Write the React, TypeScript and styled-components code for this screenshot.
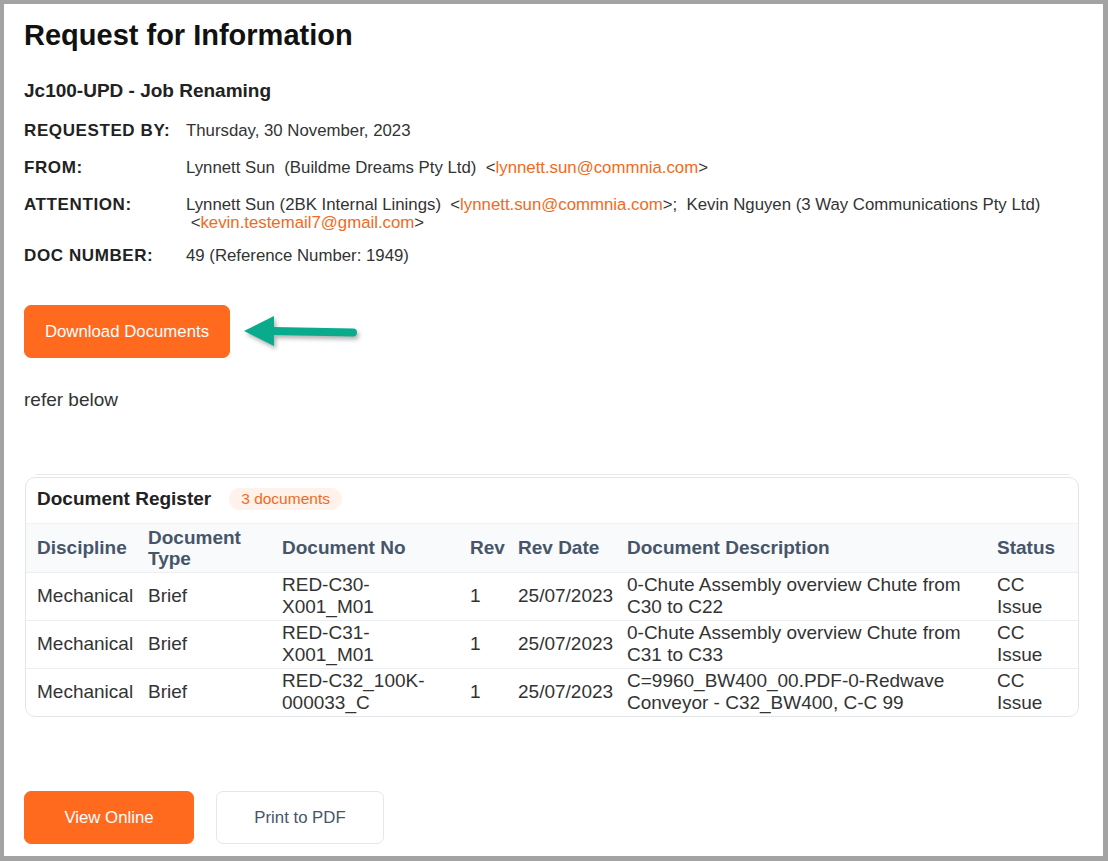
import React from 'react';
import styled, { createGlobalStyle } from 'styled-components';

const GlobalStyle = createGlobalStyle`
  html, body {
    margin: 0;
    padding: 0;
    background: #ffffff;
  }
  body {
    font-family: "Liberation Sans", Arial, sans-serif;
    color: #333333;
  }
  * {
    box-sizing: border-box;
  }
`;

const Frame = styled.div`
  width: 1108px;
  height: 861px;
  border-style: solid;
  border-color: #a3a3a3;
  border-width: 4px 5px 5px 4px;
  padding: 14px 24px 0 20px;
  overflow: hidden;
`;

const Title = styled.h1`
  margin: 0;
  font-size: 29px;
  line-height: 34px;
  font-weight: 700;
  color: #111111;
`;

const Subject = styled.h2`
  margin: 28px 0 0;
  font-size: 19px;
  line-height: 22px;
  font-weight: 700;
  color: #222222;
`;

const InfoGrid = styled.div`
  margin-top: 18px;
  display: grid;
  grid-template-columns: 162px 1fr;
  row-gap: 15px;
`;

const Label = styled.div`
  font-size: 17px;
  letter-spacing: 0.6px;
  font-weight: 700;
  line-height: 22px;
  color: #222222;
`;

const Value = styled.div`
  font-size: 16.8px;
  line-height: 18px;
  padding-top: 2px;
  margin-bottom: -2px;
  color: #333333;
`;

const Email = styled.span`
  color: #f26a21;
`;

const ActionRow = styled.div`
  margin-top: 38px;
  display: flex;
  align-items: center;
`;

const Button = styled.button<{ $variant?: 'primary' | 'outline'; $width: number }>`
  width: ${p => p.$width}px;
  height: 53px;
  padding: 0;
  font-family: "Liberation Sans", Arial, sans-serif;
  font-size: 16.8px;
  border-radius: 7px;
  cursor: pointer;
  background: ${p => (p.$variant === 'outline' ? '#ffffff' : '#ff6a1f')};
  color: ${p => (p.$variant === 'outline' ? '#475569' : '#ffffff')};
  border: 1px solid ${p => (p.$variant === 'outline' ? '#e5e7eb' : '#ff6a1f')};
`;

const Arrow = styled.svg`
  margin-left: 13px;
  margin-top: 2px;
  filter: drop-shadow(2px 3px 2px rgba(0, 0, 0, 0.3));
`;

const Note = styled.p`
  margin: 32px 0 0;
  font-size: 19px;
  line-height: 20px;
  color: #333333;
`;

const Divider = styled.div`
  margin: 64px 9px 0 12px;
  height: 1px;
  background: #e8eaed;
`;

const Card = styled.section`
  margin-top: 2px;
  margin-left: 1px;
  border: 1px solid #e3e5e8;
  border-radius: 10px;
  overflow: hidden;
`;

const CardHeader = styled.div`
  height: 46px;
  display: flex;
  align-items: center;
  gap: 18px;
  padding: 0 11px 3px;
  border-bottom: 1px solid #f0f2f5;
`;

const CardTitle = styled.h3`
  margin: 0;
  font-size: 19px;
  font-weight: 700;
  color: #222222;
`;

const Badge = styled.span`
  height: 22px;
  display: inline-flex;
  align-items: center;
  padding: 0 12px;
  border-radius: 11px;
  background: #fff2ea;
  color: #f26a21;
  font-size: 15.5px;
`;

const Table = styled.table`
  width: 100%;
  border-collapse: collapse;
  table-layout: fixed;
  font-size: 19px;
`;

const Th = styled.th<{ $w?: number }>`
  width: ${p => (p.$w ? `${p.$w}px` : 'auto')};
  height: 48px;
  padding: 0 12px 0 11px;
  text-align: left;
  font-weight: 700;
  line-height: 21px;
  color: #475569;
  background: #f8fafc;
`;

const Td = styled.td<{ $nowrap?: boolean }>`
  height: 48px;
  padding: 0 12px 0 11px;
  line-height: 22px;
  color: #333333;
  border-top: 1px solid #eceef1;
  white-space: ${p => (p.$nowrap ? 'nowrap' : 'normal')};
`;

const Footer = styled.div`
  margin-top: 74px;
  display: flex;
  gap: 22px;
`;

const docs = [
  {
    discipline: 'Mechanical',
    type: 'Brief',
    no: 'RED-C30-X001_M01',
    rev: '1',
    date: '25/07/2023',
    description: '0-Chute Assembly overview Chute from C30 to C22',
    status: 'CC Issue',
  },
  {
    discipline: 'Mechanical',
    type: 'Brief',
    no: 'RED-C31-X001_M01',
    rev: '1',
    date: '25/07/2023',
    description: '0-Chute Assembly overview Chute from C31 to C33',
    status: 'CC Issue',
  },
  {
    discipline: 'Mechanical',
    type: 'Brief',
    no: 'RED-C32_100K-000033_C',
    rev: '1',
    date: '25/07/2023',
    description: 'C=9960_BW400_00.PDF-0-Redwave Conveyor - C32_BW400, C-C 99',
    status: 'CC Issue',
  },
];

const App: React.FC = () => {
  return (
    <>
      <GlobalStyle />
      <Frame>
        <Title>Request for Information</Title>
        <Subject>Jc100-UPD - Job Renaming</Subject>

        <InfoGrid>
          <Label>REQUESTED BY:</Label>
          <Value>Thursday, 30 November, 2023</Value>

          <Label>FROM:</Label>
          <Value>
            Lynnett Sun&nbsp; (Buildme Dreams Pty Ltd)&nbsp; &lt;<Email>lynnett.sun@commnia.com</Email>&gt;
          </Value>

          <Label>ATTENTION:</Label>
          <Value>
            Lynnett Sun (2BK Internal Linings)&nbsp; &lt;<Email>lynnett.sun@commnia.com</Email>&gt;;&nbsp; Kevin
            Nguyen (3 Way Communications Pty Ltd)
            <br />
            &nbsp;&lt;<Email>kevin.testemail7@gmail.com</Email>&gt;
          </Value>

          <Label>DOC NUMBER:</Label>
          <Value>49 (Reference Number: 1949)</Value>
        </InfoGrid>

        <ActionRow>
          <Button $width={206}>Download Documents</Button>
          <Arrow width="118" height="40" viewBox="0 0 118 40">
            <path d="M30 18 L110 19.5" stroke="#0aab8c" strokeWidth="8" strokeLinecap="round" fill="none" />
            <polygon points="1,18 31,3 31,33" fill="#0aab8c" />
          </Arrow>
        </ActionRow>

        <Note>refer below</Note>

        <Divider />
        <Card>
          <CardHeader>
            <CardTitle>Document Register</CardTitle>
            <Badge>3 documents</Badge>
          </CardHeader>
          <Table>
            <thead>
              <tr>
                <Th $w={111}>Discipline</Th>
                <Th $w={134}>Document Type</Th>
                <Th $w={188}>Document No</Th>
                <Th $w={48}>Rev</Th>
                <Th $w={109}>Rev Date</Th>
                <Th $w={370}>Document Description</Th>
                <Th>Status</Th>
              </tr>
            </thead>
            <tbody>
              {docs.map(doc => (
                <tr key={doc.no}>
                  <Td $nowrap>{doc.discipline}</Td>
                  <Td>{doc.type}</Td>
                  <Td>{doc.no}</Td>
                  <Td>{doc.rev}</Td>
                  <Td $nowrap>{doc.date}</Td>
                  <Td>{doc.description}</Td>
                  <Td>{doc.status}</Td>
                </tr>
              ))}
            </tbody>
          </Table>
        </Card>

        <Footer>
          <Button $width={170}>View Online</Button>
          <Button $variant="outline" $width={168}>Print to PDF</Button>
        </Footer>
      </Frame>
    </>
  );
};

export default App;
